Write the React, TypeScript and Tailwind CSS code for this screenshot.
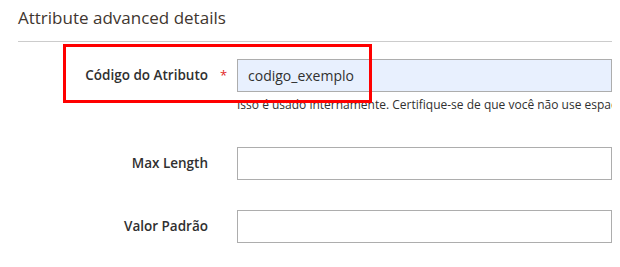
import React from 'react';

type Field = {
    label: string;
    value?: string;
    required?: boolean;
    note?: string;
    autofilled?: boolean;
};

const fields: Field[] = [
    {
        label: 'Código do Atributo',
        value: 'codigo_exemplo',
        required: true,
        autofilled: true,
        note: 'Isso é usado internamente. Certifique-se de que você não use espaços ou mais de 30 caracteres.',
    },
    { label: 'Max Length' },
    { label: 'Valor Padrão' },
];

export default function App() {
    return (
        <div className="relative w-[620px] h-[267px] overflow-hidden bg-white font-['Open_Sans',sans-serif] text-[#303030]">
            <div className="pl-[18px] pr-[8px]">
                <h2 className="pt-[6px] text-[17px] leading-[24px] text-[#41362f]">Attribute advanced details</h2>
                <div className="mt-[11px] border-t border-[#cccccc]" />

                <div className="pt-[17px] flex flex-col">
                    {fields.map((f, i) => (
                        <div key={f.label} className={`flex ${i === 0 ? '' : i === 1 ? 'mt-[34px]' : 'mt-[30px]'}`}>
                            <div className="w-[190px] shrink-0 flex justify-end pt-[7px]">
                                <label className="text-[13.5px] leading-[18px] font-semibold whitespace-nowrap">{f.label}</label>
                            </div>
                            <div className="w-[29px] shrink-0 pt-[7px] pl-[12px] text-[13px] leading-[18px] text-[#e22626]">
                                {f.required ? '*' : ''}
                            </div>
                            <div className="flex-1 min-w-0 overflow-hidden">
                                <input
                                    type="text"
                                    defaultValue={f.value}
                                    className={`block w-full h-[33px] border border-[#adadad] px-[10px] text-[14px] text-[#303030] outline-none ${f.autofilled ? 'bg-[#e8f0fe]' : 'bg-white'}`}
                                />
                                {f.note && (
                                    <p className="mt-[5px] text-[12px] leading-[16px] whitespace-nowrap">{f.note}</p>
                                )}
                            </div>
                        </div>
                    ))}
                </div>
            </div>

            {/* annotation box */}
            <div className="absolute left-[63px] top-[44px] w-[309px] h-[59px] border-[3px] border-[#ff0000] pointer-events-none" />
        </div>
    );
}
